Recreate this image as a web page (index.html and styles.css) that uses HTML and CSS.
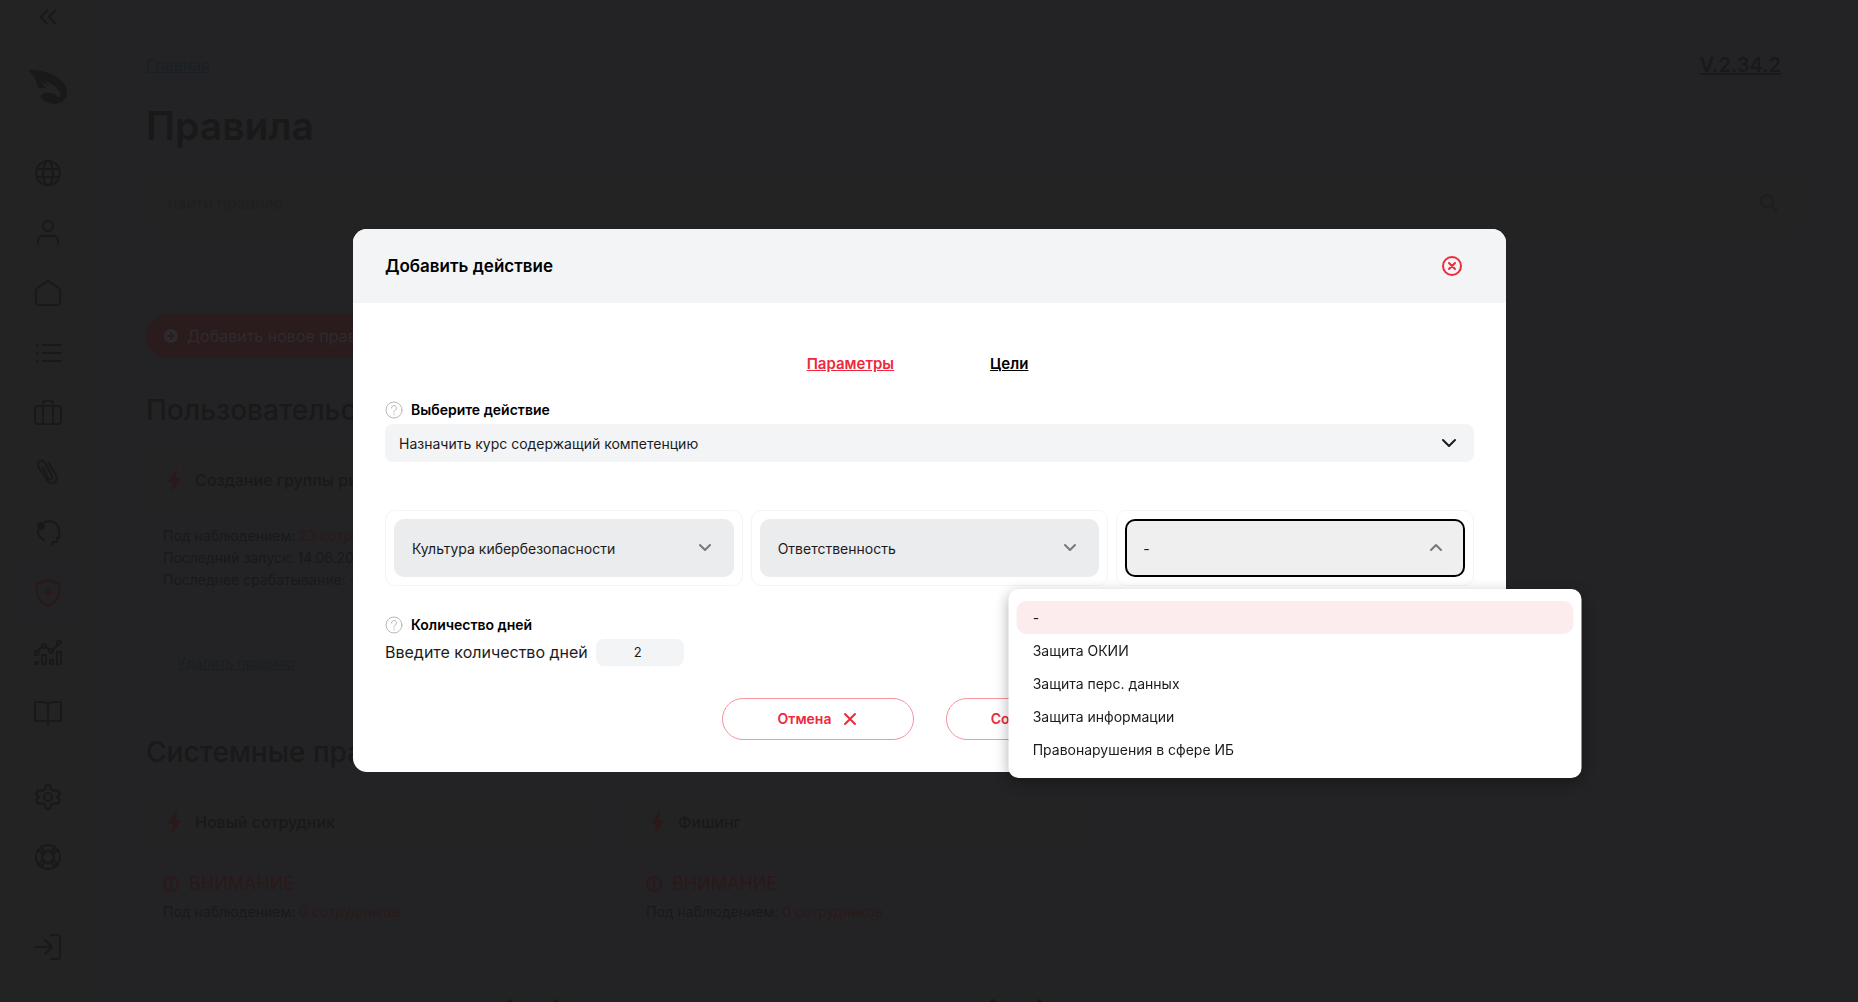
FILE: index.html
```html
<!DOCTYPE html>
<html lang="ru">
<head>
  <meta charset="UTF-8">
  <meta name="viewport" content="width=device-width, initial-scale=1.0">
  <title>Правила</title>
  <link rel="stylesheet" href="styles.css">
</head>
<body>
  <div class="layout">
    <aside class="sidebar">
      <button class="collapse" aria-label="Свернуть меню">
        <svg class="icon" viewBox="0 0 28 28"><path d="M13 7l-7 7 7 7M22 7l-7 7 7 7"/></svg>
      </button>
      <a class="logo" href="#" aria-label="На главную">
        <svg viewBox="0 0 42 36"><path d="M1 1c9 0 20 1 29 7 7 5 11 11 10 17-1 6-6 10-14 10-6-1-12-4-12-8 1-3 5-4 9-3l5 1 2 3 3 0 1-4-6-7-11-6 5 6-9-5 6 7-7 0c-3-3-2-6-4-9C6 6 4 3 1 1z"/></svg>
      </a>
      <nav class="nav">
        <a class="nav-item" href="#" aria-label="Портал">
          <svg class="icon" viewBox="0 0 28 28"><circle cx="14" cy="14" r="12"/><ellipse cx="14" cy="14" rx="5" ry="12"/><path d="M3 10h22M3 18h22"/></svg>
        </a>
        <a class="nav-item" href="#" aria-label="Профиль">
          <svg class="icon" viewBox="0 0 28 28"><circle cx="14" cy="7" r="5"/><path d="M4 25v-3c0-3 2-5 5-5h10c3 0 5 2 5 5v3"/></svg>
        </a>
        <a class="nav-item" href="#" aria-label="Компания">
          <svg class="icon" viewBox="0 0 28 28"><path d="M2 10l12-8 12 8v14a2 2 0 0 1-2 2H4a2 2 0 0 1-2-2z"/></svg>
        </a>
        <a class="nav-item" href="#" aria-label="Список">
          <svg class="icon" viewBox="0 0 28 28"><path d="M9 6h17M9 14h17M9 22h17M3 6h0.5M3 14h0.5M3 22h0.5"/></svg>
        </a>
        <a class="nav-item" href="#" aria-label="Курсы">
          <svg class="icon" viewBox="0 0 28 28"><rect x="1" y="7" width="26" height="18" rx="3"/><path d="M9 25V4a2 2 0 0 1 2-2h6a2 2 0 0 1 2 2v21"/></svg>
        </a>
        <a class="nav-item" href="#" aria-label="Вложения">
          <svg class="icon" viewBox="0 0 28 28"><path d="M15 4l7 12c3 7-5 12-9 5L5 9C1 2 8-1 12 5l6 12c1 3-2 5-4 2L9 9"/></svg>
        </a>
        <a class="nav-item" href="#" aria-label="Обучение">
          <svg class="icon" viewBox="0 0 28 28"><path d="M11 3c8-3 15 3 14 10 0 2 1 3 1 5l-3 1v3c0 1-1 1-2 1h-2l-1 3M4 11c0 5 2 8 6 10"/><circle class="solid" cx="7" cy="7" r="3"/></svg>
        </a>
        <a class="nav-item active" href="#" aria-label="Правила">
          <svg class="icon" viewBox="0 0 28 28"><path d="M14 1l11 4v9c0 6-5 10-11 13C8 24 3 20 3 14V5zM14 9v9M9.500 13.500h9"/></svg>
        </a>
        <a class="nav-item" href="#" aria-label="Отчёты">
          <svg class="icon" viewBox="0 0 28 28"><circle cx="2.500" cy="14" r="2"/><circle cx="10" cy="7" r="2"/><circle cx="17" cy="12" r="2"/><circle cx="25" cy="3.500" r="2"/><path d="M4 12l4-4M12 8l4 3M19 11l5-6M1 23h3v2H1zM8 16h4v9H8zM16 21h3v4h-3zM23 13h4v12h-4z"/></svg>
        </a>
        <a class="nav-item" href="#" aria-label="Справочник">
          <svg class="icon" viewBox="0 0 28 28"><path d="M14 26v-2c0-1-1-2-3-2H1V3h9c2 0 4 2 4 4 0-2 2-4 4-4h9v19H17c-2 0-3 1-3 2M14 7v16"/></svg>
        </a>
      </nav>
      <nav class="nav nav-service">
        <a class="nav-item" href="#" aria-label="Настройки">
          <svg class="icon" viewBox="0 0 28 28"><circle cx="14" cy="14" r="4"/><path d="M12 2h4l1 4 3 2 4-1 2 4-3 3 3 3-2 4-4-1-3 2-1 4h-4l-1-4-3-2-4 1-2-4 3-3-3-3 2-4 4 1 3-2z"/></svg>
        </a>
        <a class="nav-item" href="#" aria-label="Поддержка">
          <svg class="icon" viewBox="0 0 28 28"><circle cx="14" cy="14" r="12"/><circle cx="14" cy="14" r="6"/><path d="M4 7l6 4M7 4l4 6M24 7l-6 4M21 4l-4 6M4 21l6-4M7 24l4-6M24 21l-6-4M21 24l-4-6"/></svg>
        </a>
      </nav>
      <nav class="nav nav-exit">
        <a class="nav-item" href="#" aria-label="Выход">
          <svg class="icon" viewBox="0 0 28 28"><path d="M2 14h16M11 7l7 7-7 7M17 2h7a2 2 0 0 1 2 2v20a2 2 0 0 1-2 2h-7"/></svg>
        </a>
      </nav>
    </aside>

    <main class="content">
      <div class="topline">
        <a class="crumb" href="#">Главная</a>
        <a class="version" href="#">V.2.34.2</a>
      </div>
      <h1>Правила</h1>
      <div class="search">
        <input type="text" placeholder="найти правило" aria-label="найти правило">
        <svg class="icon search-icon" viewBox="0 0 20 20"><circle cx="8" cy="8" r="6"/><path d="M12 12l6 6"/></svg>
      </div>
      <button class="add-rule">
        <svg viewBox="0 0 16 16"><circle class="solid" cx="8" cy="8" r="6"/><path class="plus" d="M8 5v6M5 8h6"/></svg>
        Добавить новое правило
      </button>

      <h2>Пользовательские правила</h2>
      <div class="cards">
        <article class="card card-user">
          <header class="card-head">
            <svg class="bolt" viewBox="0 0 14 24"><path d="M9 0L0 14h5L4 24l9-14H8z"/></svg>
            <h3>Создание группы риска</h3>
          </header>
          <div class="card-body">
            <p>Под наблюдением: <span class="count">23 сотрудника</span></p>
            <p>Последний запуск: 14.06.2024</p>
            <p>Последнее срабатывание: -</p>
            <a class="remove" href="#">Удалить правило</a>
          </div>
        </article>
      </div>

      <h2>Системные правила</h2>
      <div class="cards">
        <article class="card">
          <header class="card-head">
            <svg class="bolt" viewBox="0 0 14 24"><path d="M9 0L0 14h5L4 24l9-14H8z"/></svg>
            <h3>Новый сотрудник</h3>
          </header>
          <div class="card-body card-warning">
            <p class="warning"><svg viewBox="0 0 16 16"><circle cx="8" cy="8" r="7"/><path d="M8 4v5M8 11v1"/></svg>ВНИМАНИЕ</p>
            <p>Под наблюдением: <span class="count">0 сотрудников</span></p>
          </div>
          <footer class="card-actions">
            <button aria-label="Изменить"><svg viewBox="0 0 18 18"><path d="M2 16l1-5 9-9 4 4-9 9z"/></svg></button>
            <button aria-label="Запустить"><svg viewBox="0 0 18 18"><path d="M5 2l10 7-10 7z"/></svg></button>
          </footer>
        </article>
        <article class="card">
          <header class="card-head">
            <svg class="bolt" viewBox="0 0 14 24"><path d="M9 0L0 14h5L4 24l9-14H8z"/></svg>
            <h3>Фишинг</h3>
          </header>
          <div class="card-body card-warning">
            <p class="warning"><svg viewBox="0 0 16 16"><circle cx="8" cy="8" r="7"/><path d="M8 4v5M8 11v1"/></svg>ВНИМАНИЕ</p>
            <p>Под наблюдением: <span class="count">0 сотрудников</span></p>
          </div>
          <footer class="card-actions">
            <button aria-label="Изменить"><svg viewBox="0 0 18 18"><path d="M2 16l1-5 9-9 4 4-9 9z"/></svg></button>
            <button aria-label="Запустить"><svg viewBox="0 0 18 18"><path d="M5 2l10 7-10 7z"/></svg></button>
          </footer>
        </article>
      </div>
    </main>
  </div>

  <div class="overlay">
    <section class="modal" role="dialog" aria-modal="true" aria-labelledby="modal-title">
      <header class="modal-head">
        <h2 id="modal-title">Добавить действие</h2>
        <button class="close" aria-label="Закрыть">
          <svg viewBox="0 0 22 22"><circle cx="11" cy="11" r="9"/><path d="M8 8l6 6M14 8l-6 6"/></svg>
        </button>
      </header>
      <form class="modal-body">
        <div class="tabs">
          <a class="tab current" href="#params">Параметры</a>
          <a class="tab" href="#goals">Цели</a>
        </div>

        <div class="field-label">
          <svg class="help" viewBox="0 0 18 18"><circle cx="9" cy="9" r="8"/><path d="M6.500 7a2.500 2.500 0 1 1 4 2c-1 .7-1.500 1-1.500 2.200M9 13v.8"/></svg>
          <label for="action">Выберите действие</label>
        </div>
        <div class="select select-action">
          <select id="action">
            <option>Назначить курс содержащий компетенцию</option>
          </select>
          <svg class="chevron" viewBox="0 0 16 16"><path d="M2 5l6 6 6-6"/></svg>
        </div>

        <div class="levels">
          <div class="level">
            <div class="select">
              <select aria-label="Компетенция">
                <option>Культура кибербезопасности</option>
              </select>
              <svg class="chevron" viewBox="0 0 16 16"><path d="M3 5l5 5 5-5"/></svg>
            </div>
          </div>
          <div class="level">
            <div class="select">
              <select aria-label="Раздел">
                <option>Ответственность</option>
              </select>
              <svg class="chevron" viewBox="0 0 16 16"><path d="M3 5l5 5 5-5"/></svg>
            </div>
          </div>
          <div class="level">
            <div class="select open">
              <select aria-label="Тема" aria-controls="topics">
                <option>-</option>
              </select>
              <svg class="chevron" viewBox="0 0 16 16"><path d="M3 10l5-5 5 5"/></svg>
              <ul class="menu" id="topics" role="listbox">
                <li class="selected" role="option" aria-selected="true">-</li>
                <li role="option">Защита ОКИИ</li>
                <li role="option">Защита перс. данных</li>
                <li role="option">Защита информации</li>
                <li role="option">Правонарушения в сфере ИБ</li>
              </ul>
            </div>
          </div>
        </div>

        <div class="field-label days-label">
          <svg class="help" viewBox="0 0 18 18"><circle cx="9" cy="9" r="8"/><path d="M6.500 7a2.500 2.500 0 1 1 4 2c-1 .7-1.500 1-1.500 2.200M9 13v.8"/></svg>
          <span>Количество дней</span>
        </div>
        <div class="days">
          <label for="days">Введите количество дней</label>
          <input id="days" type="text" value="2">
        </div>

        <div class="buttons">
          <button type="button">Отмена <svg viewBox="0 0 14 14"><path d="M2 2l10 10M12 2L2 12"/></svg></button>
          <button type="submit">Сохранить <svg viewBox="0 0 14 14"><path d="M1 7l4 4 8-8"/></svg></button>
        </div>
      </form>
    </section>
  </div>
</body>
</html>
```
FILE: styles.css
```css
:root {
  --page: #232325;
  --panel: #232323;
  --ink: #191919;
  --dim-red: #2b181a;
  --dim-blue: #191f24;
  --red: #f0283c;
  --gray: #f3f4f6;
}
* {
  box-sizing: border-box;
}
body {
  margin: 0;
  height: 100vh;
  overflow: hidden;
  background: var(--page);
  color: var(--ink);
  font-family: Inter, "Liberation Sans", sans-serif;
  font-size: 14px;
}
button, input, select {
  font: inherit;
  color: inherit;
  border: 0;
  margin: 0;
}
button {
  background: none;
  padding: 0;
  cursor: pointer;
}
svg {
  display: block;
  flex: none;
  fill: none;
  stroke: currentColor;
  stroke-width: 2;
  stroke-linecap: round;
  stroke-linejoin: round;
}
h1, h2, h3, p, ul {
  margin: 0;
  padding: 0;
}
.layout {
  display: flex;
  height: 100vh;
  overflow: hidden;
}

/* sidebar */
.sidebar {
  width: 95px;
  flex: none;
  background: var(--panel);
  display: flex;
  flex-direction: column;
  align-items: center;
}
.collapse {
  height: 34px;
  display: flex;
  align-items: center;
}
.icon {
  width: 28px;
  height: 28px;
}
.collapse .icon {
  width: 26px;
  height: 26px;
}
.logo {
  height: 106px;
  display: flex;
  align-items: center;
  color: var(--ink);
}
.logo svg {
  width: 42px;
  height: 36px;
  fill: currentColor;
  stroke: none;
}
.nav {
  margin-top: 3px;
}
.nav-service {
  margin-top: 24px;
}
.nav-exit {
  margin-top: 30px;
}
.nav-item {
  width: 64px;
  height: 60px;
  display: flex;
  align-items: center;
  justify-content: center;
  border-radius: 8px;
  color: var(--ink);
}
.nav-item.active {
  background: var(--page);
  color: var(--dim-red);
}
.solid {
  fill: currentColor;
}

/* page content */
.content {
  flex: 1;
  padding: 51px 53px 0 51px;
}
.topline {
  display: flex;
  justify-content: space-between;
  align-items: center;
  height: 28px;
  padding-right: 24px;
}
.crumb {
  color: var(--dim-blue);
  font-size: 16px;
}
.version {
  color: var(--ink);
  font-size: 20px;
  font-weight: 600;
}
h1 {
  margin-top: 23px;
  font-size: 39px;
  line-height: 48px;
  font-weight: 600;
}
.search {
  margin-top: 24px;
  height: 58px;
  padding: 0 26px 0 22px;
  display: flex;
  align-items: center;
  background: var(--panel);
  border-radius: 10px;
}
.search input {
  flex: 1;
  background: none;
  font-size: 16px;
  padding: 0;
}
.search input::placeholder {
  color: #1f1f20;
}
.search-icon {
  width: 20px;
  height: 20px;
  color: #1e1e1e;
}
.add-rule {
  margin-top: 82px;
  height: 44px;
  width: 260px;
  padding-left: 17px;
  display: flex;
  align-items: center;
  gap: 8px;
  border-radius: 22px;
  background: #2a1b1d;
  color: #2d2b2e;
  font-size: 16px;
  white-space: nowrap;
}
.add-rule svg {
  width: 16px;
  height: 16px;
}
.add-rule .plus {
  stroke: #2a1b1d;
}
.content h2 {
  margin-top: 34px;
  font-size: 28px;
  line-height: 36px;
  font-weight: 500;
}
.cards {
  display: flex;
  gap: 32px;
  margin-top: 24px;
}
.card {
  width: 451px;
}
.card-user {
  height: 248px;
}
.card-head {
  height: 56px;
  padding-left: 22px;
  display: flex;
  align-items: center;
  gap: 13px;
  background: var(--panel);
  border-radius: 10px;
}
.card-head h3 {
  font-size: 16px;
  font-weight: 500;
}
.bolt {
  width: 14px;
  height: 24px;
  fill: var(--dim-red);
  stroke: none;
}
.card-body {
  padding: 17px 17px 0;
  line-height: 22px;
}
.count {
  color: var(--dim-red);
}
.remove {
  display: inline-block;
  margin: 61px 0 0 14px;
  color: var(--dim-blue);
}
.card-warning {
  padding-top: 21px;
}
.warning {
  display: flex;
  align-items: center;
  gap: 10px;
  height: 26px;
  margin-bottom: 4px;
  color: var(--dim-red);
  font-size: 18px;
}
.warning svg {
  width: 16px;
  height: 16px;
}
.card-actions {
  display: flex;
  justify-content: flex-end;
  gap: 12px;
  padding: 64px 18px 0 0;
}
.card-actions button {
  width: 40px;
  height: 40px;
  display: flex;
  align-items: center;
  justify-content: center;
  background: var(--panel);
  border-radius: 8px;
}
.card-actions svg {
  width: 18px;
  height: 18px;
}

/* dialog */
.overlay {
  position: fixed;
  inset: 0;
  padding: 0 352px 2px 353px;
  display: flex;
  align-items: center;
}
.modal {
  flex: 1;
  background: #fff;
  color: #1b1b1c;
  border-radius: 14px;
}
.modal-head {
  height: 74px;
  padding: 0 43px 0 32px;
  display: flex;
  align-items: center;
  justify-content: space-between;
  background: var(--gray);
  border-radius: 14px 14px 0 0;
}
.modal-head h2 {
  font-size: 17px;
  font-weight: 600;
  color: #000;
}
.close {
  color: var(--red);
}
.close svg {
  width: 22px;
  height: 22px;
}
.modal-body {
  padding: 51px 32px 32px;
}
.tabs {
  display: flex;
  justify-content: center;
  gap: 96px;
  padding-right: 24px;
  line-height: 20px;
}
.tab {
  color: #000;
  font-size: 15px;
  font-weight: 600;
}
.tab.current {
  color: var(--red);
}
.field-label {
  margin-top: 27px;
  height: 18px;
  display: flex;
  align-items: center;
  gap: 8px;
  color: #000;
  font-weight: 600;
}
.help {
  width: 18px;
  height: 18px;
  stroke: #b8b8ba;
  stroke-width: 1;
}
.select {
  position: relative;
}
.select select {
  appearance: none;
  display: block;
  width: 100%;
  height: 58px;
  padding: 2px 18px 0;
  border-radius: 10px;
  background: #ebecee;
}
.select .chevron {
  position: absolute;
  right: 21px;
  top: 50%;
  width: 16px;
  height: 16px;
  margin-top: -8px;
  color: #77787b;
  pointer-events: none;
}
.select-action {
  margin-top: 5px;
}
.select-action select {
  height: 38px;
  padding: 2px 14px 0;
  border-radius: 8px;
  background: var(--gray);
}
.select-action .chevron {
  right: 17px;
  color: #1b1b1c;
}
.levels {
  display: grid;
  grid-template-columns: repeat(3, 1fr);
  gap: 8px;
  margin-top: 48px;
}
.level {
  padding: 8px;
  border: 1px solid var(--gray);
  border-radius: 10px;
}
.open select {
  padding: 2px 16px 0;
  border: 2px solid #000;
  background: #efefef;
}
.menu {
  position: absolute;
  top: calc(100% + 12px);
  left: 50%;
  transform: translateX(-50%);
  width: 573px;
  padding: 12px 8px;
  background: #fff;
  border-radius: 10px;
  box-shadow: 0 4px 14px rgba(0, 0, 0, 0.3);
  list-style: none;
}
.menu li {
  padding: 0 16px;
  line-height: 33px;
  border-radius: 10px;
}
.menu .selected {
  background: #fdecee;
}
.days-label {
  margin-top: 30px;
}
.days {
  display: flex;
  align-items: center;
  gap: 8px;
  margin-top: 5px;
  font-size: 16px;
}
.days input {
  width: 88px;
  height: 27px;
  padding: 0 4px 0 0;
  text-align: center;
  font-size: 13px;
  background: var(--gray);
  border-radius: 8px;
}
.buttons {
  display: flex;
  justify-content: center;
  gap: 32px;
  margin-top: 32px;
}
.buttons button {
  width: 192px;
  height: 42px;
  display: flex;
  align-items: center;
  justify-content: center;
  gap: 12px;
  border: 1px solid #f9939d;
  border-radius: 21px;
  color: var(--red);
  font-weight: 600;
}
.buttons svg {
  width: 14px;
  height: 14px;
}
```
